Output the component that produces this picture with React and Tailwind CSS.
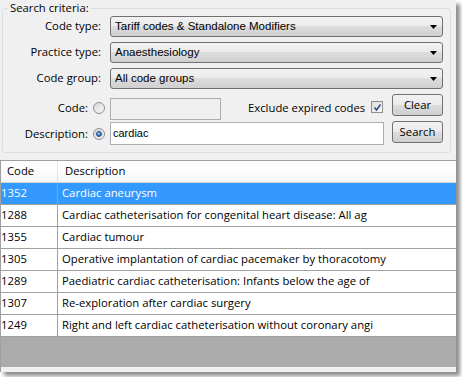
import React from 'react';

const rows = [
  ['1352', 'Cardiac aneurysm'],
  ['1288', 'Cardiac catheterisation for congenital heart disease: All ag'],
  ['1355', 'Cardiac tumour'],
  ['1305', 'Operative implantation of cardiac pacemaker by thoracotomy'],
  ['1289', 'Paediatric cardiac catheterisation: Infants below the age of'],
  ['1307', 'Re-exploration after cardiac surgery'],
  ['1249', 'Right and left cardiac catheterisation without coronary angi'],
];

const Arrow = () => (
  <svg width="7" height="4" viewBox="0 0 7 4">
    <polygon points="0,0 7,0 3.5,4" fill="#000" />
  </svg>
);

const Combo = ({ value }) => (
  <div className="flex h-[21px] w-[333px] items-center justify-between rounded-[3px] border border-[#707070] bg-[linear-gradient(#f2f2f2,#ebebeb_50%,#dddddd_50%,#cfcfcf)] pl-[4px] pr-[5px] font-['Liberation_Sans',sans-serif] text-[11.5px] text-black">
    <span>{value}</span>
    <Arrow />
  </div>
);

const Radio = ({ checked }) => (
  <div className="flex h-[12px] w-[12px] items-center justify-center rounded-full border border-[#8e8f8f] bg-[linear-gradient(135deg,#d8d8d8,#f8f8f8)]">
    {checked && (
      <div className="h-[6px] w-[6px] rounded-full border border-[#1c4a7a] bg-[radial-gradient(circle_at_40%_35%,#9fd2ff,#2a7bd0_60%,#124c8c)]" />
    )}
  </div>
);

const Button = ({ children }) => (
  <div className="flex h-[22px] w-[51px] items-center justify-center rounded-[3px] border border-[#707070] bg-[linear-gradient(#f2f2f2,#ebebeb_50%,#dddddd_50%,#cfcfcf)] text-black">
    {children}
  </div>
);

export default function App() {
  return (
    <div className="h-[377px] w-[462px] overflow-hidden bg-white font-['Open_Sans',sans-serif] text-[11.3px] text-black">
      <div className="flex h-[372px] w-[456px] flex-col bg-[#f0f0f0] shadow-[4px_4px_4px_rgba(0,0,0,0.45)]">
        <div className="h-[160px] shrink-0 pl-[2px] pr-[5px]">
          <fieldset className="h-[153px] rounded-[3px] border border-[#d5dfe5] pl-0 pr-[6px]">
            <legend className="ml-[5px] px-[2px] leading-[16px]">Search criteria:</legend>
            <div className="flex flex-col gap-[5px]">
              {[
                ['Code type:', 'Tariff codes & Standalone Modifiers'],
                ['Practice type:', 'Anaesthesiology'],
                ['Code group:', 'All code groups'],
              ].map(([label, value]) => (
                <div key={label} className="flex items-center">
                  <div className="w-[98px] text-right">{label}</div>
                  <div className="ml-[9px]">
                    <Combo value={value} />
                  </div>
                </div>
              ))}
            </div>
            <div className="mt-[5px] flex h-[26px] items-start">
              <div className="mt-[6px] w-[85px] text-right">Code:</div>
              <div className="ml-[5px] mt-[8px]">
                <Radio />
              </div>
              <div className="ml-[5px] mt-[4px] h-[22px] w-[111px] border border-[#abadb3] bg-[#f0f0f0]" />
              <div className="ml-[27px] mt-[6px] w-[115px] whitespace-nowrap text-right">Exclude expired codes</div>
              <div className="ml-[8px] mt-[7px] flex h-[12px] w-[12px] items-center justify-center border border-[#8f8f8f] bg-[linear-gradient(135deg,#dcdcdc,#fafafa)]">
                <svg width="9" height="9" viewBox="0 0 9 9">
                  <path d="M1.5 4.5 L3.5 7 L7.5 1.5" stroke="#2c4f8c" strokeWidth="1.6" fill="none" />
                </svg>
              </div>
              <div className="ml-[9px]">
                <Button>Clear</Button>
              </div>
            </div>
            <div className="mt-[1px] flex items-start">
              <div className="mt-[5px] w-[85px] text-right">Description:</div>
              <div className="ml-[5px] mt-[7px]">
                <Radio checked />
              </div>
              <div className="ml-[5px] mt-[1px] flex h-[23px] w-[274px] items-center border border-[#abadb3] bg-white pl-[2px] font-['Liberation_Sans',sans-serif] text-[11px]">
                cardiac
              </div>
              <div className="ml-[8px]">
                <Button>Search</Button>
              </div>
            </div>
          </fieldset>
        </div>

        <div className="flex min-h-0 flex-1 flex-col border-l border-t border-[#a0a0a0]">
          <div className="flex h-[22px] shrink-0 border-b border-[#d5d5d5] bg-[linear-gradient(#ffffff,#f7f8fa)]">
            <div className="flex w-[57px] items-center border-r border-[#e3e3e3] pl-[6px]">Code</div>
            <div className="flex flex-1 items-center pl-[7px]">Description</div>
          </div>
          {rows.map(([code, desc], i) => (
            <div
              key={code}
              className={
                i === 0
                  ? 'flex h-[22px] shrink-0 border-b border-[#a0a0a0] bg-[#3399ff] text-white'
                  : 'flex h-[22px] shrink-0 border-b border-[#a0a0a0] bg-white'
              }
            >
              <div className="flex w-[57px] items-center border-r border-[#a0a0a0]">{code}</div>
              <div className="flex flex-1 items-center overflow-hidden whitespace-nowrap pl-[4px]">{desc}</div>
            </div>
          ))}
          <div className="flex-1 bg-[#ababab]" />
          <div className="h-[5px] shrink-0 bg-[#f0f0f0]" />
        </div>
      </div>
    </div>
  );
}
